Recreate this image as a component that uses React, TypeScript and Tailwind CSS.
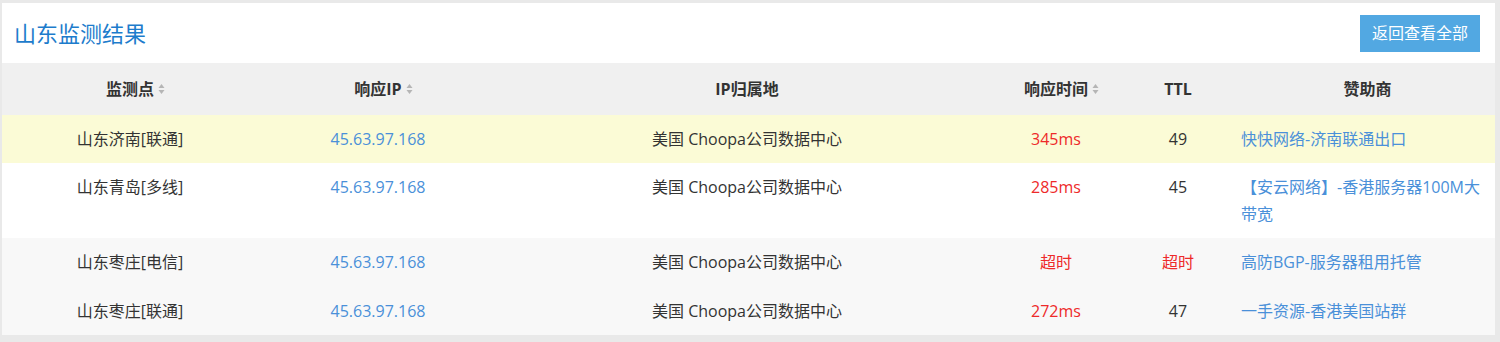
import React from "react";

const font = { fontFamily: '"Open Sans", "Noto Sans CJK SC", sans-serif' };

function SortIcon() {
  return (
    <svg width="7" height="11" viewBox="0 0 7 11" className="absolute left-full top-1/2 -translate-y-1/2 ml-1">
      <path d="M3.5 0.5 L6.5 4.5 L0.5 4.5 Z" fill="#b5b5b5" />
      <path d="M3.5 10.5 L6.5 6.5 L0.5 6.5 Z" fill="#b5b5b5" />
    </svg>
  );
}

function SortLabel({ children }: { children: React.ReactNode }) {
  return (
    <div className="flex justify-center">
      <span className="relative">
        {children}
        <SortIcon />
      </span>
    </div>
  );
}

type Row = {
  node: string;
  ip: string;
  loc: string;
  time: string;
  ttl: string;
  sponsor: string;
  bg: string;
  h: string;
};

const rows: Row[] = [
  { node: "山东济南[联通]", ip: "45.63.97.168", loc: "美国 Choopa公司数据中心", time: "345ms", ttl: "49", sponsor: "快快网络-济南联通出口", bg: "bg-[#fbfbd6]", h: "h-[48px]" },
  { node: "山东青岛[多线]", ip: "45.63.97.168", loc: "美国 Choopa公司数据中心", time: "285ms", ttl: "45", sponsor: "【安云网络】-香港服务器100M大带宽", bg: "bg-white", h: "h-[75px]" },
  { node: "山东枣庄[电信]", ip: "45.63.97.168", loc: "美国 Choopa公司数据中心", time: "超时", ttl: "超时", sponsor: "高防BGP-服务器租用托管", bg: "bg-[#f8f8f8]", h: "h-[49px]" },
  { node: "山东枣庄[联通]", ip: "45.63.97.168", loc: "美国 Choopa公司数据中心", time: "272ms", ttl: "47", sponsor: "一手资源-香港美国站群", bg: "bg-[#f8f8f8]", h: "h-[48px]" },
];

const cols = "grid grid-cols-[256px_240px_498px_120px_124px_1fr]";

export default function App() {
  return (
    <div className="w-[1500px] h-[342px] bg-[#e9e9e9] pt-[3px] pl-[2px] pr-[5px]" style={font}>
      <div className="bg-white">
        {/* Title + back button */}
        <div className="flex items-center justify-between h-[60px] pl-3 pr-[15px]">
          <h1 className="text-[22px] text-[#1d7ccc] leading-none">山东监测结果</h1>
          <button className="w-[120px] h-[37px] bg-[#52a8e2] text-white text-[16px]">返回查看全部</button>
        </div>

        {/* Table head */}
        <div className={`${cols} h-[52px] items-center bg-[#f0f0f0] text-[16px] font-bold text-[#333]`}>
          <SortLabel>监测点</SortLabel>
          <SortLabel>响应IP</SortLabel>
          <div className="text-center">IP归属地</div>
          <SortLabel>响应时间</SortLabel>
          <div className="text-center">TTL</div>
          <div className="text-center">赞助商</div>
        </div>

        {/* Rows */}
        {rows.map((r, i) => (
          <div key={i} className={`${cols} ${r.bg} ${r.h} items-start pt-[11px] text-[16px] leading-[27px] text-[#333]`}>
            <div className="text-center">{r.node}</div>
            <div className="text-center text-[#4a90d9]">{r.ip}</div>
            <div className="text-center">{r.loc}</div>
            <div className="text-center text-[#ee2a2a]">{r.time}</div>
            <div className={`text-center ${r.ttl === "超时" ? "text-[#ee2a2a]" : ""}`}>{r.ttl}</div>
            <div className="pl-[1px] pr-[10px] text-[#4a90d9]">{r.sponsor}</div>
          </div>
        ))}
      </div>
    </div>
  );
}
